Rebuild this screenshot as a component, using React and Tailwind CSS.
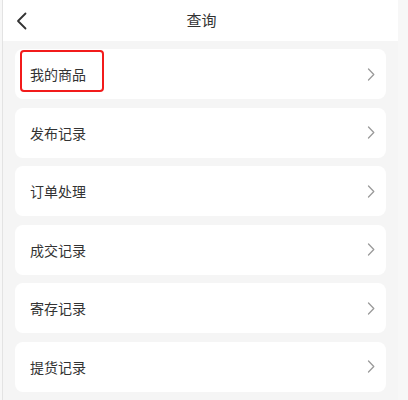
const items = ["我的商品", "发布记录", "订单处理", "成交记录", "寄存记录", "提货记录"]

function Chevron(){
    return(
        <svg width="8" height="13" viewBox="0 0 8 13" fill="none">
            <path d="M1.5 1L6.8 6.5 1.5 12" stroke="#9a9a9a" strokeWidth="1.3" strokeLinecap="round" strokeLinejoin="round" />
        </svg>
    )
}

function App(){
    return(
        <div className="w-[408px] h-[400px] bg-[#f7f7f7] overflow-hidden" style={{fontFamily: '"Noto Sans CJK SC", "Noto Sans", sans-serif'}}>
            <div className="ml-[2px] w-[396px] h-[400px] border-l border-[#e3e3e3] bg-[#f5f5f5]">
                {/* header */}
                <div className="h-[41px] bg-white relative flex items-center justify-center">
                    <svg className="absolute left-[13px] top-[12px]" width="12" height="18" viewBox="0 0 12 18" fill="none">
                        <path d="M9.5 1.5L2 9l7.5 7.5" stroke="#333" strokeWidth="1.8" strokeLinecap="round" strokeLinejoin="round" />
                    </svg>
                    <span className="text-[15px] text-[#333] pl-[2px]">查询</span>
                </div>

                {/* list */}
                <div className="flex flex-col gap-[8.6px] px-[12px] pt-[8px]">
                    {items.map((t, i) => (
                        <div key={t} className="relative h-[50px] bg-white rounded-[8px] flex items-center justify-between pl-[15px] pr-[11px]">
                            <span className="text-[14px] text-[#333] mt-[1px]">{t}</span>
                            <Chevron />
                            {i === 0 && (
                                <div className="absolute left-[5px] top-[1px] w-[84px] h-[42px] rounded-[4px] border-2 border-[#f21b1b]"></div>
                            )}
                        </div>
                    ))}
                </div>
            </div>
        </div>
    )
}

export default App
